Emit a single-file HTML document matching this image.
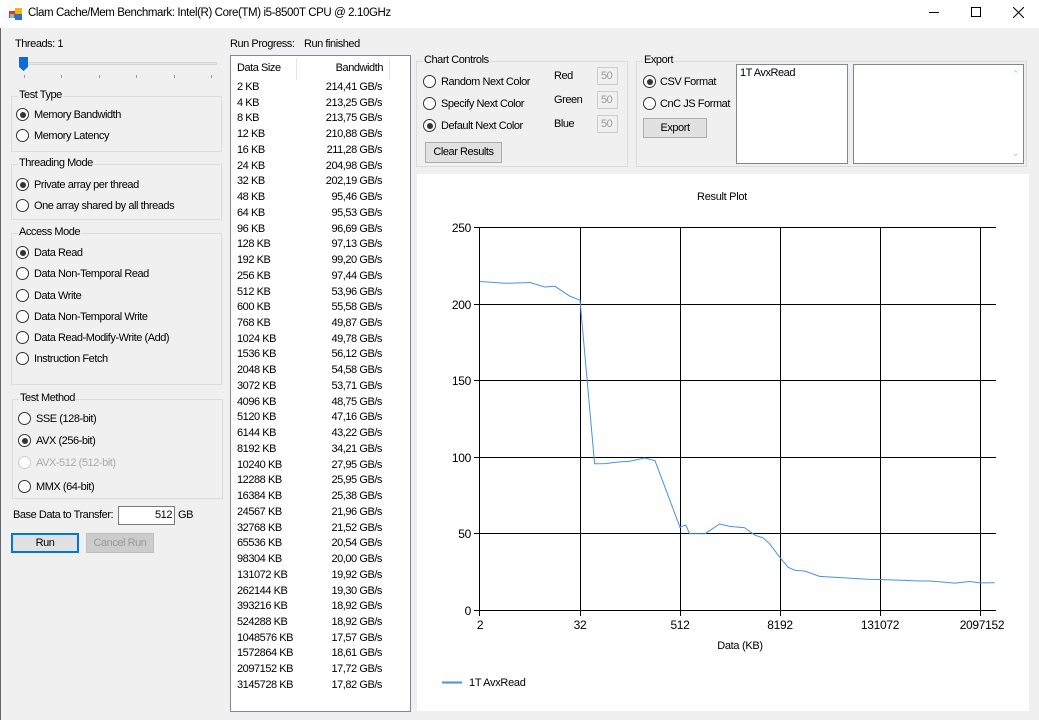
<!DOCTYPE html>
<html><head><meta charset="utf-8"><style>
*{box-sizing:border-box;margin:0;padding:0}
body{width:1039px;height:720px;background:#f0f0f0;font-family:"Liberation Sans",sans-serif;font-size:11px;letter-spacing:-0.45px;color:#000;position:relative;overflow:hidden}
.a{position:absolute;white-space:nowrap}
.title{position:absolute;left:0;top:0;width:1039px;height:28px;background:#fff}
.gb{position:absolute;border:1px solid #dcdcdc}
.gb>span{position:absolute;top:-8px;left:6px;background:#f0f0f0;padding:0 1px}
.r{position:absolute;width:13px;height:13px;border:1px solid #333;border-radius:50%;background:#fff}
.r.on::after{content:"";position:absolute;left:2.5px;top:2.5px;width:6px;height:6px;border-radius:50%;background:#333}
.r.dis{border-color:#ccc}
.btn{position:absolute;background:#e1e1e1;border:1px solid #adadad;text-align:center}
.tb{position:absolute;background:#fff;border:1px solid #7a7a7a}
.dtb{position:absolute;background:#f0f0f0;border:1px solid #ccc;color:#999;padding:2px 0 0 3px}
.rows div{height:15.74px;line-height:15.74px;position:relative}
.rows b{font-weight:normal;position:absolute;right:27px}
</style></head><body>
<div class="title">
 <svg class="a" style="left:9px;top:7px" width="14" height="14"><rect x="0" y="4" width="6" height="7" fill="#d33"/><rect x="6" y="1" width="7" height="6" fill="#f5b800"/><rect x="6" y="7" width="7" height="6" fill="#2a6fd6"/><rect x="1" y="7" width="4" height="4" fill="#6cc"/></svg>
 <div class="a" style="left:28px;top:7px;font-size:11.5px;letter-spacing:-0.4px">Clam Cache/Mem Benchmark: Intel(R) Core(TM) i5-8500T CPU @ 2.10GHz</div>
 <div class="a" style="left:929px;top:12px;width:10px;height:1px;background:#000"></div>
 <div class="a" style="left:971px;top:7px;width:10px;height:10px;border:1px solid #000"></div>
 <svg class="a" style="left:1013px;top:7px" width="11" height="11"><path d="M0 0L11 11M11 0L0 11" stroke="#000" stroke-width="1"/></svg>
</div>
<div class="a" style="left:0;top:28px;width:1px;height:692px;background:#666"></div>

<div class="a" style="left:15px;top:38px">Threads: 1</div>
<div class="a" style="left:20px;top:62px;width:197px;height:3px;background:#e7e7e7;border:1px solid #d6d6d6"></div>
<svg class="a" style="left:19px;top:57px" width="10" height="15"><path d="M0 0H9V10L4.5 14L0 10Z" fill="#0f6bd2"/></svg>
<div class="a" style="left:24px;top:75px;width:1px;height:3px;background:#999"></div>
<div class="a" style="left:61px;top:75px;width:1px;height:3px;background:#999"></div>
<div class="a" style="left:99px;top:75px;width:1px;height:3px;background:#999"></div>
<div class="a" style="left:136px;top:75px;width:1px;height:3px;background:#999"></div>
<div class="a" style="left:174px;top:75px;width:1px;height:3px;background:#999"></div>
<div class="a" style="left:211px;top:75px;width:1px;height:3px;background:#999"></div>

<div class="gb" style="left:11px;top:96px;width:211px;height:56px"><span>Test Type</span></div>
<div class="r on" style="left:16px;top:108px"></div><div class="a" style="left:34px;top:109px">Memory Bandwidth</div>
<div class="r" style="left:16px;top:129px"></div><div class="a" style="left:34px;top:130px">Memory Latency</div>

<div class="gb" style="left:11px;top:164px;width:211px;height:56px"><span>Threading Mode</span></div>
<div class="r on" style="left:16px;top:178px"></div><div class="a" style="left:34px;top:179px">Private array per thread</div>
<div class="r" style="left:16px;top:199px"></div><div class="a" style="left:34px;top:200px">One array shared by all threads</div>

<div class="gb" style="left:11px;top:233px;width:211px;height:152px"><span>Access Mode</span></div>
<div class="r on" style="left:16px;top:246px"></div><div class="a" style="left:34px;top:247px">Data Read</div>
<div class="r" style="left:16px;top:267px"></div><div class="a" style="left:34px;top:268px">Data Non-Temporal Read</div>
<div class="r" style="left:16px;top:289px"></div><div class="a" style="left:34px;top:290px">Data Write</div>
<div class="r" style="left:16px;top:310px"></div><div class="a" style="left:34px;top:311px">Data Non-Temporal Write</div>
<div class="r" style="left:16px;top:331px"></div><div class="a" style="left:34px;top:332px">Data Read-Modify-Write (Add)</div>
<div class="r" style="left:16px;top:352px"></div><div class="a" style="left:34px;top:353px">Instruction Fetch</div>

<div class="gb" style="left:12px;top:399px;width:211px;height:100px"><span>Test Method</span></div>
<div class="r" style="left:18px;top:412px"></div><div class="a" style="left:36px;top:413px">SSE (128-bit)</div>
<div class="r on" style="left:18px;top:434px"></div><div class="a" style="left:36px;top:435px">AVX (256-bit)</div>
<div class="r dis" style="left:18px;top:456px"></div><div class="a" style="left:36px;top:457px;color:#aaa">AVX-512 (512-bit)</div>
<div class="r" style="left:18px;top:480px"></div><div class="a" style="left:36px;top:481px">MMX (64-bit)</div>

<div class="a" style="left:13px;top:509px">Base Data to Transfer:</div>
<div class="tb" style="left:118px;top:506px;width:57px;height:19px;text-align:right;padding:2px 2px 0 0">512</div>
<div class="a" style="left:178px;top:509px">GB</div>
<div class="btn" style="left:11px;top:533px;width:68px;height:20px;border:2px solid #0078d7;line-height:16px">Run</div>
<div class="btn" style="left:86px;top:533px;width:68px;height:20px;background:#ccc;border-color:#bfbfbf;color:#999;line-height:18px">Cancel Run</div>

<div class="a" style="left:230px;top:38px">Run Progress:</div>
<div class="a" style="left:304px;top:38px">Run finished</div>
<div class="a" style="left:230px;top:55px;width:181px;height:657px;background:#fff;border:1px solid #828790">
 <div class="a" style="left:65px;top:2px;width:1px;height:22px;background:#e5e5e5"></div>
 <div class="a" style="left:158px;top:2px;width:1px;height:22px;background:#e5e5e5"></div>
 <div class="a" style="left:6px;top:6px">Data Size</div>
 <div class="a" style="right:27px;top:6px">Bandwidth</div>
 <div class="rows a" style="left:6px;top:24px;width:172px">
<div>2 KB<b>214,41 GB/s</b></div><div>4 KB<b>213,25 GB/s</b></div><div>8 KB<b>213,75 GB/s</b></div><div>12 KB<b>210,88 GB/s</b></div><div>16 KB<b>211,28 GB/s</b></div><div>24 KB<b>204,98 GB/s</b></div><div>32 KB<b>202,19 GB/s</b></div><div>48 KB<b>95,46 GB/s</b></div><div>64 KB<b>95,53 GB/s</b></div><div>96 KB<b>96,69 GB/s</b></div><div>128 KB<b>97,13 GB/s</b></div><div>192 KB<b>99,20 GB/s</b></div><div>256 KB<b>97,44 GB/s</b></div><div>512 KB<b>53,96 GB/s</b></div><div>600 KB<b>55,58 GB/s</b></div><div>768 KB<b>49,87 GB/s</b></div><div>1024 KB<b>49,78 GB/s</b></div><div>1536 KB<b>56,12 GB/s</b></div><div>2048 KB<b>54,58 GB/s</b></div><div>3072 KB<b>53,71 GB/s</b></div><div>4096 KB<b>48,75 GB/s</b></div><div>5120 KB<b>47,16 GB/s</b></div><div>6144 KB<b>43,22 GB/s</b></div><div>8192 KB<b>34,21 GB/s</b></div><div>10240 KB<b>27,95 GB/s</b></div><div>12288 KB<b>25,95 GB/s</b></div><div>16384 KB<b>25,38 GB/s</b></div><div>24567 KB<b>21,96 GB/s</b></div><div>32768 KB<b>21,52 GB/s</b></div><div>65536 KB<b>20,54 GB/s</b></div><div>98304 KB<b>20,00 GB/s</b></div><div>131072 KB<b>19,92 GB/s</b></div><div>262144 KB<b>19,30 GB/s</b></div><div>393216 KB<b>18,92 GB/s</b></div><div>524288 KB<b>18,92 GB/s</b></div><div>1048576 KB<b>17,57 GB/s</b></div><div>1572864 KB<b>18,61 GB/s</b></div><div>2097152 KB<b>17,72 GB/s</b></div><div>3145728 KB<b>17,82 GB/s</b></div>
 </div>
</div>

<div class="gb" style="left:416px;top:61px;width:212px;height:106px"><span>Chart Controls</span></div>
<div class="r" style="left:423px;top:75px"></div><div class="a" style="left:441px;top:76px">Random Next Color</div>
<div class="r" style="left:423px;top:97px"></div><div class="a" style="left:441px;top:98px">Specify Next Color</div>
<div class="r on" style="left:423px;top:119px"></div><div class="a" style="left:441px;top:120px">Default Next Color</div>
<div class="a" style="left:554px;top:70px">Red</div><div class="dtb" style="left:597px;top:67px;width:21px;height:18px">50</div>
<div class="a" style="left:554px;top:94px">Green</div><div class="dtb" style="left:597px;top:91px;width:21px;height:18px">50</div>
<div class="a" style="left:554px;top:118px">Blue</div><div class="dtb" style="left:597px;top:115px;width:21px;height:18px">50</div>
<div class="btn" style="left:425px;top:142px;width:77px;height:21px;line-height:19px">Clear Results</div>

<div class="gb" style="left:636px;top:61px;width:391px;height:106px"><span>Export</span></div>
<div class="r on" style="left:643px;top:75px"></div><div class="a" style="left:660px;top:76px">CSV Format</div>
<div class="r" style="left:643px;top:97px"></div><div class="a" style="left:660px;top:98px">CnC JS Format</div>
<div class="btn" style="left:643px;top:118px;width:64px;height:20px;line-height:18px">Export</div>
<div class="tb" style="left:736px;top:64px;width:112px;height:100px;border-color:#828790;padding:2px 3px">1T AvxRead</div>
<div class="tb" style="left:853px;top:64px;width:171px;height:100px;border-color:#828790">
 <div class="a" style="right:4px;top:4px;color:#bbb;font-size:9px">&#8963;</div>
 <div class="a" style="right:4px;bottom:4px;color:#bbb;font-size:9px">&#8964;</div>
</div>

<div class="a" style="left:417px;top:174px;width:612px;height:537px;background:#fff"></div>
<svg class="a" style="left:0;top:0;letter-spacing:-0.3px" width="1039" height="720" font-family="Liberation Sans" font-size="11">
 <text x="722" y="200" text-anchor="middle">Result Plot</text>
 <g stroke="#000" stroke-width="1" shape-rendering="crispEdges">
  <line x1="474" y1="227.5" x2="996" y2="227.5"/>
  <line x1="474" y1="304.5" x2="996" y2="304.5"/>
  <line x1="474" y1="380.5" x2="996" y2="380.5"/>
  <line x1="474" y1="457.5" x2="996" y2="457.5"/>
  <line x1="474" y1="533.5" x2="996" y2="533.5"/>
  <line x1="474" y1="610.5" x2="996" y2="610.5"/>
  <line x1="479.5" y1="227" x2="479.5" y2="616"/>
  <line x1="580.5" y1="227" x2="580.5" y2="616"/>
  <line x1="680.5" y1="227" x2="680.5" y2="616"/>
  <line x1="780.5" y1="227" x2="780.5" y2="616"/>
  <line x1="880.5" y1="227" x2="880.5" y2="616"/>
  <line x1="980.5" y1="227" x2="980.5" y2="616"/>
 </g>
 <g text-anchor="end" font-size="12">
  <text x="471" y="232">250</text><text x="471" y="309">200</text><text x="471" y="385">150</text><text x="471" y="462">100</text><text x="471" y="538">50</text><text x="471" y="615">0</text>
 </g>
 <g text-anchor="middle" font-size="12">
  <text x="480" y="629">2</text><text x="580" y="629">32</text><text x="680" y="629">512</text><text x="780" y="629">8192</text><text x="880" y="629">131072</text><text x="982" y="629">2097152</text>
 </g>
 <text x="740" y="649" text-anchor="middle">Data (KB)</text>
 <polyline fill="none" stroke="#4a90e8" stroke-width="1" points="480,281.5 505,283.3 530,282.5 544.6,287 555,286.3 569.6,296 580,300.2 594.6,463.8 605,463.6 619.6,461.9 630,461.2 644.6,458 655,460.7 680,527.3 685.7,524.9 689.6,533.6 705,533.7 719.6,524 730,526.4 744.6,527.7 755,535.3 763,537.8 769.6,543.8 780,557.6 788,567.2 794.6,570.2 805,571.1 819.6,576.4 830,577 855,578.5 869.6,579.4 880,579.5 905,580.4 919.6,581 930,581 955,583.1 969.6,581.5 980,582.9 994.6,582.7"/>
 <line x1="442" y1="682.5" x2="462" y2="682.5" stroke="#4a90e8" stroke-width="2"/>
 <text x="469" y="686">1T AvxRead</text>
</svg>
</body></html>
